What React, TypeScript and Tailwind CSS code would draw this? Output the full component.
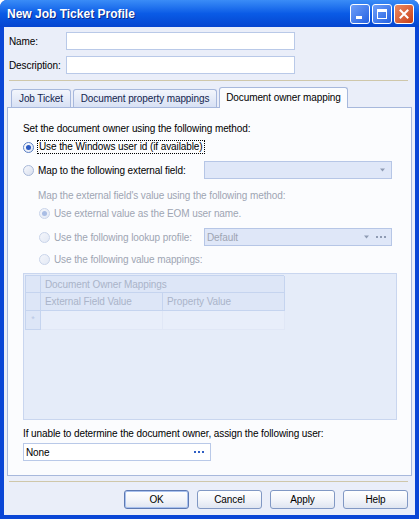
import React from 'react';

type RadioProps = { checked?: boolean; disabled?: boolean };

function Radio({ checked, disabled }: RadioProps) {
  const ring = disabled
    ? 'border-[#c9d4ea] bg-gradient-to-br from-[#f4f6fb] to-[#e3e9f5]'
    : checked
      ? 'border-[#5a7fc4] bg-gradient-to-br from-white to-[#dfe6f4]'
      : 'border-[#a8b8d8] bg-gradient-to-br from-[#f7f8fc] to-[#d9e0ef]';
  const dot = disabled ? 'bg-[#a9bde4]' : 'bg-[#2d5bc3]';
  return (
    <span className={`flex h-[11px] w-[11px] shrink-0 items-center justify-center rounded-full border ${ring}`}>
      {checked && <span className={`h-[5px] w-[5px] rounded-full ${dot}`} />}
    </span>
  );
}

function Arrow({ color }: { color: string }) {
  return (
    <svg width="7" height="4" viewBox="0 0 7 4" className="shrink-0">
      <path d="M1 0.5h5L3.5 3.5z" fill={color} />
    </svg>
  );
}

function Dots({ color }: { color: string }) {
  return (
    <span className="flex shrink-0 gap-[2px]">
      <span className={`h-[2px] w-[2px] ${color}`} />
      <span className={`h-[2px] w-[2px] ${color}`} />
      <span className={`h-[2px] w-[2px] ${color}`} />
    </span>
  );
}

function DialogButton({ label, isDefault }: { label: string; isDefault?: boolean }) {
  return (
    <button
      type="button"
      className={`flex h-[19px] w-[65px] items-center justify-center rounded-[3px] border bg-gradient-to-b from-white via-[#f3f5fa] to-[#dfe5f1] text-black ${
        isDefault ? 'border-[#5d79b3] shadow-[inset_0_0_0_1px_#a9c1ee]' : 'border-[#8198c4]'
      }`}
    >
      {label}
    </button>
  );
}

export default function App() {
  return (
    <div className="flex h-[519px] w-[419px] flex-col overflow-hidden rounded-t-[7px] bg-[#0a46d6] font-['Liberation_Sans',Arial,sans-serif] text-[10px] tracking-[-0.1px] text-black">
      {/* title bar */}
      <div className="flex h-[27px] shrink-0 items-center bg-gradient-to-b from-[#3a8cf7] via-[#0a5be6] to-[#0645d0] pl-[7px] pr-[5px]">
        <span className="flex-1 text-[12px] font-bold tracking-normal text-white [text-shadow:1px_1px_0_#0a2a8a]">
          New Job Ticket Profile
        </span>
        <div className="flex gap-[2px]">
          <span className="flex h-[20px] w-[20px] items-end justify-start rounded-[3px] border border-white bg-gradient-to-br from-[#6e9ef8] to-[#2461e2] pb-[4px] pl-[5px]">
            <span className="h-[3px] w-[6px] bg-white" />
          </span>
          <span className="flex h-[20px] w-[20px] items-center justify-center rounded-[3px] border border-white bg-gradient-to-br from-[#6e9ef8] to-[#2461e2]">
            <span className="h-[10px] w-[10px] border border-t-[3px] border-white" />
          </span>
          <span className="flex h-[20px] w-[20px] items-center justify-center rounded-[3px] border border-white bg-gradient-to-br from-[#ec8a62] to-[#c73d10]">
            <svg width="10" height="10" viewBox="0 0 10 10">
              <path d="M1.5 1.5l7 7M8.5 1.5l-7 7" stroke="white" strokeWidth="2" strokeLinecap="square" />
            </svg>
          </span>
        </div>
      </div>

      {/* client area */}
      <div className="mx-[4px] mb-[4px] flex flex-1 flex-col bg-[#eaeef9]">
        <div className="flex h-[18px] items-center pl-[5px] mt-[5px]">
          <span className="w-[57px]">Name:</span>
          <span className="h-[18px] w-[229px] border border-[#b9c9e8] bg-white" />
        </div>
        <div className="mt-[6px] flex h-[18px] items-center pl-[5px]">
          <span className="w-[57px]">Description:</span>
          <span className="h-[18px] w-[229px] border border-[#b9c9e8] bg-white" />
        </div>
        <div className="ml-[5px] mt-[6px] h-[2px] w-[399px] border-t border-[#cfc7aa] border-b-white" />

        {/* tabs */}
        <div className="ml-[7px] mt-[5px] flex h-[20px] items-end gap-[2px]">
          <span className="flex h-[18px] w-[60px] items-center justify-center rounded-t-[3px] border border-b-0 border-[#a7b8dc] bg-gradient-to-b from-[#f3f6fc] to-[#d8e1f4] text-[#14264f]">
            Job Ticket
          </span>
          <span className="flex h-[18px] w-[144px] items-center justify-center rounded-t-[3px] border border-b-0 border-[#a7b8dc] bg-gradient-to-b from-[#f3f6fc] to-[#d8e1f4] text-[#14264f]">
            Document property mappings
          </span>
          <span className="relative z-10 -mb-px flex h-[21px] w-[129px] items-center justify-center rounded-t-[3px] border border-b-0 border-[#a7b8dc] bg-[#fbfcfe] pb-[1px]">
            Document owner mapping
          </span>
        </div>

        {/* panel */}
        <div className="ml-[3px] flex h-[369px] w-[405px] flex-col border border-[#a7b8dc] bg-[#fbfcfe] pl-[15px]">
          <div className="mt-[13px] flex h-[14px] items-center">Set the document owner using the following method:</div>

          <div className="mt-[5px] flex h-[14px] items-center">
            <Radio checked />
            <span className="ml-[3px] border border-dotted border-black px-[1px] leading-[12px]">
              Use the Windows user id (if available)
            </span>
          </div>

          <div className="mt-[7px] flex h-[18px] items-center">
            <div className="flex w-[181px] items-center">
              <Radio />
              <span className="ml-[4px]">Map to the following external field:</span>
            </div>
            <span className="flex h-[18px] w-[188px] items-center justify-end border border-[#b6c6e6] bg-[#dfe7f8] pr-[5px]">
              <Arrow color="#8f9bb3" />
            </span>
          </div>

          <div className="ml-[15px] mt-[9px] flex h-[14px] items-center text-[#9ea5b3]">
            Map the external field's value using the following method:
          </div>

          <div className="ml-[16px] mt-[4px] flex h-[14px] items-center text-[#9ea5b3]">
            <Radio checked disabled />
            <span className="ml-[4px]">Use external value as the EOM user name.</span>
          </div>

          <div className="mt-[8px] flex h-[18px] items-center text-[#9ea5b3]">
            <div className="ml-[16px] flex w-[165px] items-center">
              <Radio disabled />
              <span className="ml-[4px]">Use the following lookup profile:</span>
            </div>
            <span className="flex h-[18px] w-[188px] items-center border border-[#b6c6e6] bg-[#dfe7f8] pl-[2px] pr-[5px]">
              <span className="flex-1">Default</span>
              <Arrow color="#8f9bb3" />
              <span className="ml-[6px]">
                <Dots color="bg-[#8f9bb3]" />
              </span>
            </span>
          </div>

          <div className="ml-[16px] mt-[6px] flex h-[14px] items-center text-[#9ea5b3]">
            <Radio disabled />
            <span className="ml-[4px]">Use the following value mappings:</span>
          </div>

          {/* grid */}
          <div className="mt-[7px] h-[147px] w-[374px] border border-[#c9d6ef] bg-[#e5ecf9] pl-[1px] pt-[1px] text-[#aab4c9]">
            <div className="grid w-[259px] grid-cols-[15px_122px_122px] grid-rows-[17px_18px_19px] border-l border-t border-[#c5d4ef]">
              <span className="border-b border-r border-[#c5d4ef] bg-[#dde6f7]" />
              <span className="col-span-2 flex items-center border-b border-r border-[#c5d4ef] bg-[#dde6f7] pl-[4px]">
                Document Owner Mappings
              </span>
              <span className="border-b border-r border-[#c5d4ef] bg-[#dde6f7]" />
              <span className="flex items-center border-b border-r border-[#c5d4ef] bg-[#dde6f7] pl-[4px]">
                External Field Value
              </span>
              <span className="flex items-center border-b border-r border-[#c5d4ef] bg-[#dde6f7] pl-[4px]">
                Property Value
              </span>
              <span className="flex items-center justify-center border-b border-r border-[#c5d4ef] bg-[#dde6f7] text-[9px] text-[#b9c8e6]">
                *
              </span>
              <span className="border-b border-r border-[#e0e7f6] bg-[#e8eefa]" />
              <span className="border-b border-r border-[#e0e7f6] bg-[#e8eefa]" />
            </div>
          </div>

          <div className="mt-[6px] flex h-[14px] items-center">
            If unable to determine the document owner, assign the following user:
          </div>
          <div className="mt-[3px] flex h-[18px] w-[188px] items-center border border-[#b9c9e8] bg-white pl-[2px] pr-[6px]">
            <span className="flex-1">None</span>
            <Dots color="bg-[#2f5fc4]" />
          </div>
        </div>

        <div className="ml-[5px] mt-[5px] h-[2px] w-[399px] border-t border-[#cfc7aa] border-b-white" />

        <div className="mr-[7px] mt-[7px] flex justify-end gap-[8px]">
          <DialogButton label="OK" isDefault />
          <DialogButton label="Cancel" />
          <DialogButton label="Apply" />
          <DialogButton label="Help" />
        </div>
      </div>
    </div>
  );
}
